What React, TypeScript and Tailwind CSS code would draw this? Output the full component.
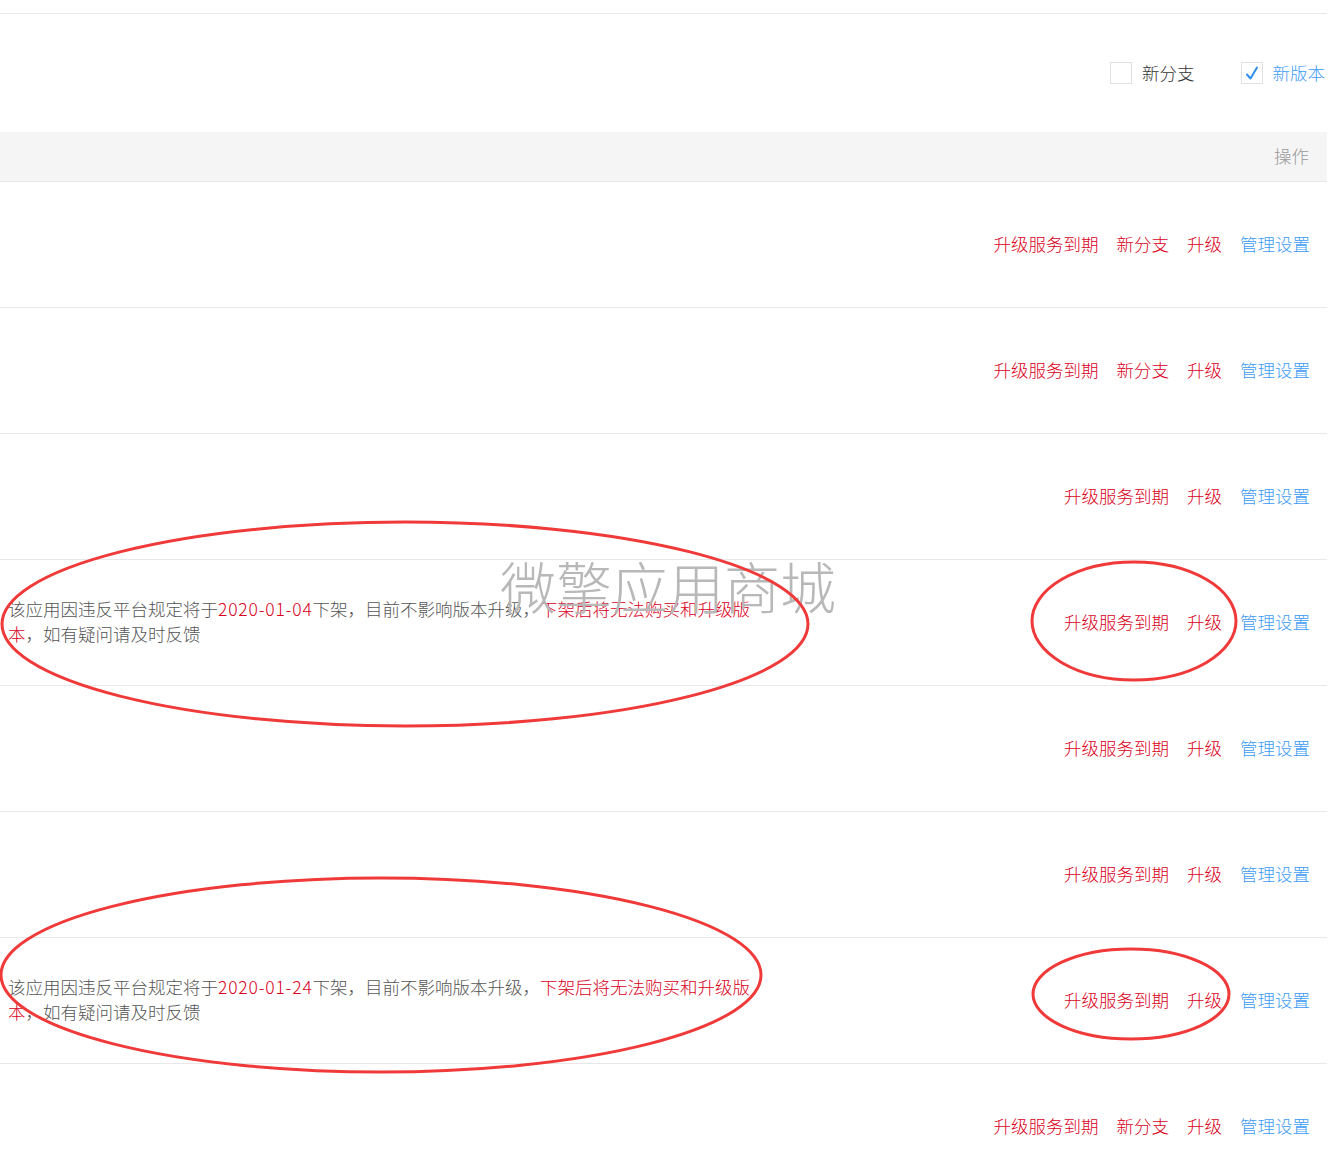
import React from 'react';

const FONT = { fontFamily: '"Noto Sans CJK SC", "Noto Sans", sans-serif' };

type Row = { ops: string[]; date?: string };

const rows: Row[] = [
  { ops: ['升级服务到期', '新分支', '升级', '管理设置'] },
  { ops: ['升级服务到期', '新分支', '升级', '管理设置'] },
  { ops: ['升级服务到期', '升级', '管理设置'] },
  { ops: ['升级服务到期', '升级', '管理设置'], date: '2020-01-04' },
  { ops: ['升级服务到期', '升级', '管理设置'] },
  { ops: ['升级服务到期', '升级', '管理设置'] },
  { ops: ['升级服务到期', '升级', '管理设置'], date: '2020-01-24' },
  { ops: ['升级服务到期', '新分支', '升级', '管理设置'] },
];

function Notice({ date }: { date: string }) {
  return (
    <p className="w-[752px] mb-[3px] text-[17.5px] leading-[25px] text-[#555]">
      该应用因违反平台规定将于<span className="text-[#d9001b] tracking-[0.8px]">{date}</span>下架，目前不影响版本升级，
      <span className="text-[#d9001b]">下架后将无法购买和升级版本</span>，如有疑问请及时反馈
    </p>
  );
}

function Ops({ ops }: { ops: string[] }) {
  return (
    <div className="flex items-center gap-[18px] text-[17.5px]">
      {ops.map((op, i) => (
        <a
          key={i}
          className={op === '管理设置' ? 'text-[#3d9bf4] cursor-pointer' : 'text-[#d9001b] cursor-pointer'}
        >
          {op}
        </a>
      ))}
    </div>
  );
}

export default function App() {
  return (
    <div className="relative w-[1339px] h-[1172px] overflow-hidden bg-white font-light" style={FONT}>
      <div className="w-[1327px] pt-[13px]">
        {/* filter bar */}
        <div className="h-[119px] border-t border-[#e8e8e8] flex items-center justify-end gap-[46px] pr-[2px] text-[17.5px]">
          <label className="flex items-center gap-[10px] text-[#333]">
            <span className="w-[22px] h-[22px] border border-[#e0e0e0] bg-white" />
            新分支
          </label>
          <label className="flex items-center gap-[10px] text-[#3d9bf4]">
            <span className="w-[22px] h-[22px] border border-[#e0e0e0] bg-white flex items-center justify-center">
              <svg width="16" height="16" viewBox="0 0 16 16">
                <path d="M3 9.5 L6.5 13.5 L13 2.5" fill="none" stroke="#2f8ff0" strokeWidth="2" strokeLinecap="round" strokeLinejoin="round" />
              </svg>
            </span>
            新版本
          </label>
        </div>

        {/* table header */}
        <div className="h-[50px] bg-[#f5f5f5] border-b border-[#e8e8e8] flex items-center justify-end pr-[18px] text-[17.5px] text-[#999]">
          操作
        </div>

        {rows.map((row, i) => (
          <div
            key={i}
            className="h-[126px] border-b border-[#e8e8e8] flex items-center justify-between pl-[8px] pr-[17px]"
          >
            <div>{row.date && <Notice date={row.date} />}</div>
            <Ops ops={row.ops} />
          </div>
        ))}
      </div>

      {/* watermark */}
      <div className="absolute left-[500px] top-[557px] text-[56px] leading-none text-[#b8b8b8] pointer-events-none">
        微擎应用商城
      </div>

      {/* annotations */}
      <svg className="absolute left-0 top-0 pointer-events-none" width="1339" height="1172">
        <g fill="none" stroke="#f03a3a" strokeWidth="3">
          <ellipse cx="405" cy="624" rx="403" ry="102" />
          <ellipse cx="1134" cy="621" rx="102" ry="59" />
          <ellipse cx="381" cy="975" rx="380" ry="97" />
          <ellipse cx="1131" cy="994" rx="98" ry="45" />
        </g>
      </svg>
    </div>
  );
}
